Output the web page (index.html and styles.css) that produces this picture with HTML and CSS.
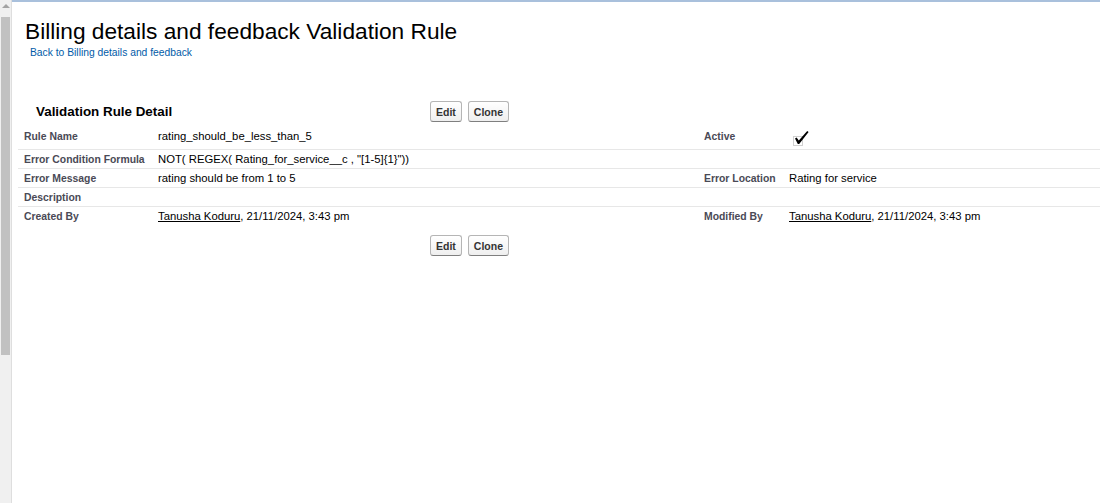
FILE: index.html
```html
<!DOCTYPE html>
<html>
<head>
<meta charset="utf-8">
<link rel="stylesheet" href="styles.css">
</head>
<body>
<div class="page">
  <div class="rail">
    <div class="rail-arrow"></div>
    <div class="rail-thumb"></div>
  </div>
  <div class="main">
    <div class="header">
      <h1 class="title">Billing details and feedback Validation Rule</h1>
      <a class="back" href="#">Back to Billing details and feedback</a>
    </div>
    <div class="detail">
      <div class="section-head">
        <h2 class="section-title">Validation Rule Detail</h2>
        <div class="buttons">
          <button class="btn">Edit</button>
          <button class="btn">Clone</button>
        </div>
      </div>
      <div class="rows">
        <div class="row first">
          <div class="label">Rule Name</div>
          <div class="value">rating_should_be_less_than_5</div>
          <div class="label">Active</div>
          <div class="value">
            <svg class="check" width="18" height="17" viewBox="0 0 18 17">
              <rect x="0.5" y="7.5" width="9" height="9" fill="none" stroke="#a0a0a0" stroke-width="1" stroke-dasharray="1 1"/>
              <path d="M2 9.5 L3.6 8.6 L5.8 11.6 L14.2 2 L15.6 3 L6.2 15 L4.8 15 Z" fill="#000"/>
            </svg>
          </div>
        </div>
        <div class="row">
          <div class="label">Error Condition Formula</div>
          <div class="value wide">NOT( REGEX( Rating_for_service__c , "[1-5]{1}"))</div>
        </div>
        <div class="row">
          <div class="label">Error Message</div>
          <div class="value">rating should be from 1 to 5</div>
          <div class="label">Error Location</div>
          <div class="value">Rating for service</div>
        </div>
        <div class="row">
          <div class="label">Description</div>
          <div class="value wide"></div>
        </div>
        <div class="row last">
          <div class="label">Created By</div>
          <div class="value"><a class="user" href="#">Tanusha Koduru</a>, 21/11/2024, 3:43 pm</div>
          <div class="label">Modified By</div>
          <div class="value"><a class="user" href="#">Tanusha Koduru</a>, 21/11/2024, 3:43 pm</div>
        </div>
      </div>
      <div class="section-foot">
        <div class="buttons">
          <button class="btn">Edit</button>
          <button class="btn">Clone</button>
        </div>
      </div>
    </div>
  </div>
</div>
</body>
</html>
```

FILE: styles.css
```css
html, body {
  margin: 0;
  padding: 0;
  background: #fff;
  font-family: "Liberation Sans", Arial, sans-serif;
}

.page {
  display: flex;
  height: 503px;
  overflow: hidden;
}

.rail {
  width: 11px;
  flex: none;
  background: #f0f0f0;
  border-right: 1px solid #dedede;
  display: flex;
  flex-direction: column;
  align-items: center;
}

.rail-arrow {
  margin-top: 4px;
  width: 0;
  height: 0;
  border-left: 4px solid transparent;
  border-right: 4px solid transparent;
  border-bottom: 4px solid #a3a3a3;
}

.rail-thumb {
  margin-top: 9px;
  width: 9px;
  height: 338px;
  background: #c1c1c1;
}

.main {
  flex: 1;
  border-top: 2px solid #a9c0dc;
}

.header {
  padding: 15px 0 0 13px;
}

.title {
  margin: 0;
  font-size: 22.7px;
  font-weight: normal;
  line-height: 28px;
  color: #000;
}

.back {
  display: block;
  margin: 1px 0 0 5px;
  font-size: 10.3px;
  line-height: 14px;
  color: #015ba7;
  text-decoration: none;
}

.detail {
  margin-top: 40px;
  padding-left: 6px;
}

.section-head {
  display: flex;
  align-items: center;
  height: 23px;
}

.section-title {
  margin: 0;
  width: 394px;
  padding-left: 18px;
  font-size: 13.4px;
  font-weight: bold;
  color: #000;
}

.buttons {
  display: flex;
  gap: 6px;
}

.btn {
  font-family: "Liberation Sans", Arial, sans-serif;
  font-size: 10.5px;
  font-weight: bold;
  color: #333;
  height: 21px;
  padding: 0 5px;
  border: 1px solid #b5b5b5;
  border-bottom-color: #7f7f7f;
  border-radius: 3px;
  background: linear-gradient(#ffffff, #efefef);
}

.rows {
  margin-top: 4px;
}

.row {
  display: grid;
  grid-template-columns: 134px 546px 85px 1fr;
  border-bottom: 1px solid #e7e7e7;
  min-height: 18px;
}

.row.first {
  min-height: 22px;
}

.row.last {
  border-bottom: none;
}

.label, .value {
  padding: 3px 6px 2px 6px;
  line-height: 13px;
  white-space: nowrap;
}

.label {
  font-size: 10.4px;
  font-weight: bold;
  color: #4a4a56;
}

.value {
  color: #000;
  font-size: 11.3px;
}

.value.wide {
  grid-column: 2 / 5;
}

.check {
  display: block;
  margin: -1px 0 0 4px;
}

.user {
  color: #000;
  text-decoration: underline;
}

.section-foot {
  padding: 10px 0 0 412px;
}
```
